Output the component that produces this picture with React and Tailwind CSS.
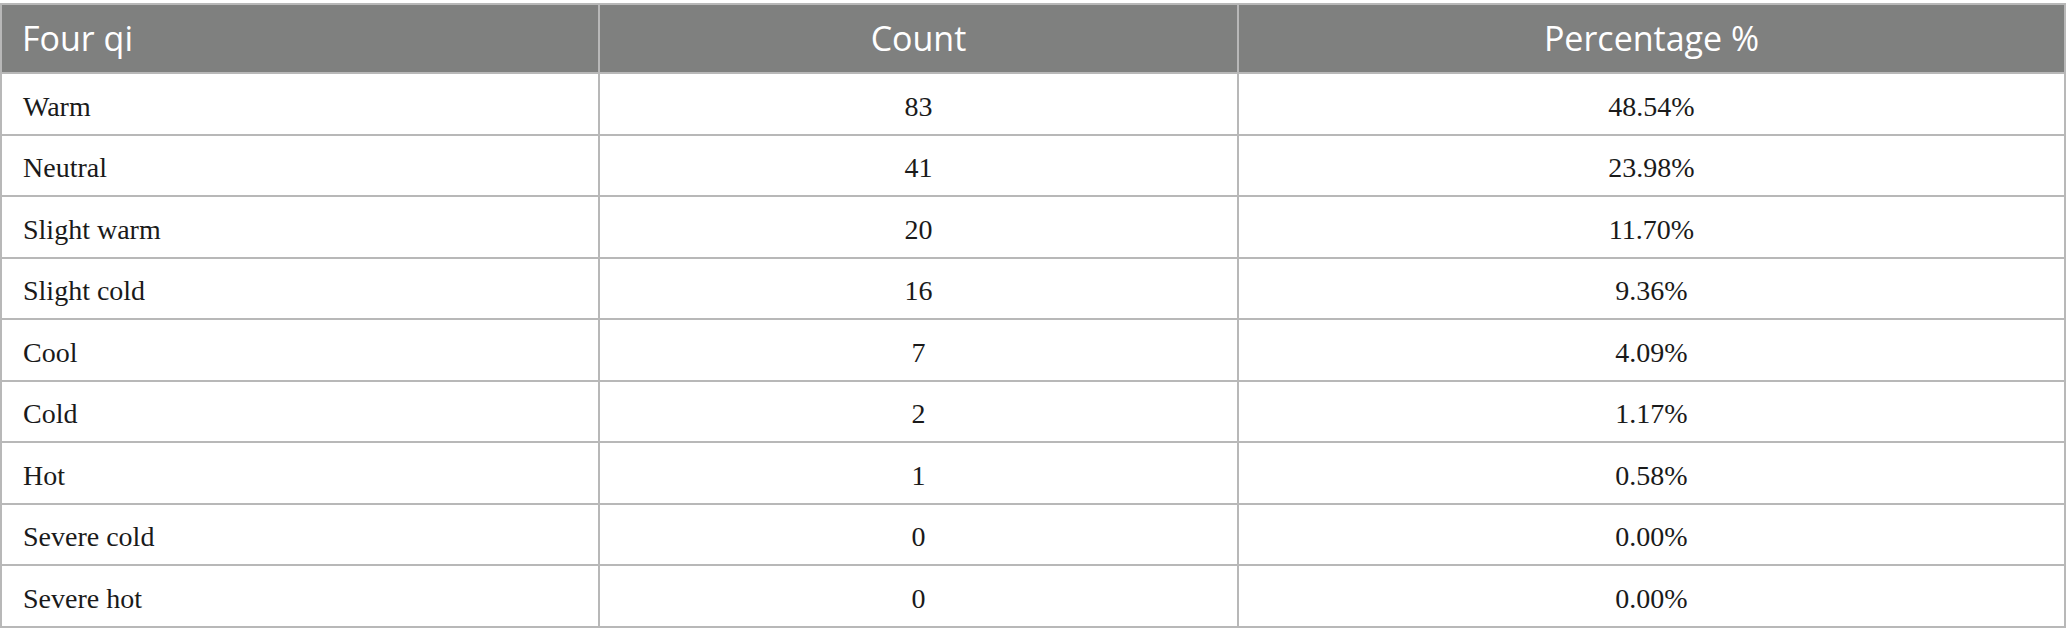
const rows = [
  ["Warm", "83", "48.54%"],
  ["Neutral", "41", "23.98%"],
  ["Slight warm", "20", "11.70%"],
  ["Slight cold", "16", "9.36%"],
  ["Cool", "7", "4.09%"],
  ["Cold", "2", "1.17%"],
  ["Hot", "1", "0.58%"],
  ["Severe cold", "0", "0.00%"],
  ["Severe hot", "0", "0.00%"],
];

export default function App() {
  return (
    <div className="w-[2067px] h-[644px] bg-white pt-[3px]">
      <table className="w-[2066px] table-fixed border-collapse border-2 border-[#b8b8b8]">
        <colgroup>
          <col className="w-[598px]" />
          <col className="w-[639px]" />
          <col />
        </colgroup>
        <thead>
          <tr className="h-[69px] bg-[#7f807f] text-white text-[34px] font-['Open_Sans',sans-serif]">
            <th className="border-2 border-[#b8b8b8] text-left font-normal pl-[20px]">Four qi</th>
            <th className="border-2 border-[#b8b8b8] text-center font-normal">Count</th>
            <th className="border-2 border-[#b8b8b8] text-center font-normal">Percentage %</th>
          </tr>
        </thead>
        <tbody className="text-[28px] text-[#1a1a1a] font-['Liberation_Serif',serif]">
          {rows.map((r) => (
            <tr key={r[0]} className="h-[61.5px]">
              <td className="border-2 border-[#b8b8b8] pl-[21px] pt-[6px]">{r[0]}</td>
              <td className="border-2 border-[#b8b8b8] text-center pt-[6px]">{r[1]}</td>
              <td className="border-2 border-[#b8b8b8] text-center pt-[6px]">{r[2]}</td>
            </tr>
          ))}
        </tbody>
      </table>
    </div>
  );
}
